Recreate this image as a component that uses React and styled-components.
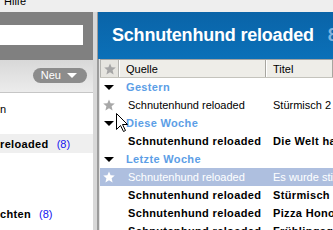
import React from "react";
import styled, { createGlobalStyle } from "styled-components";

const Global = createGlobalStyle`
  html, body { margin: 0; padding: 0; background: #ffffff; overflow: hidden; }
  body { font-family: "Liberation Sans", Arial, sans-serif; font-size: 11px; color: #000; }
`;

const Window = styled.div`
  position: relative;
  width: 333px;
  height: 230px;
  overflow: hidden;
  white-space: nowrap;
  display: flex;
  flex-direction: column;
`;

const MenuBar = styled.div`
  height: 12px;
  flex: none;
  background: #eeeeee;
  display: flex;
  align-items: flex-start;
  padding-left: 4px;
  overflow: hidden;
`;

const MenuItem = styled.span`
  margin-top: -5px;
  line-height: 12px;
  font-size: 11px;
`;

const Main = styled.div`
  flex: 1;
  display: flex;
  min-height: 0;
`;

const Sidebar = styled.div`
  width: 93px;
  flex: none;
  display: flex;
  flex-direction: column;
  background: #ffffff;
`;

const SearchBar = styled.div`
  height: 48px;
  flex: none;
  background: #808080;
  padding-top: 13px;
  box-sizing: border-box;
`;

const SearchInput = styled.div`
  width: 83px;
  height: 20px;
  background: #ffffff;
`;

const ToolBar = styled.div`
  height: 24px;
  flex: none;
  background: linear-gradient(#d8d8d8, #ececec);
  border-bottom: 1px solid #c6c6c6;
  display: flex;
  justify-content: flex-end;
  align-items: flex-start;
  padding: 8px 6px 0 0;
  box-sizing: content-box;
`;

const NewButton = styled.div`
  height: 15px;
  border-radius: 8px;
  background: #8c8c8c;
  color: #ffffff;
  display: flex;
  align-items: center;
  gap: 6px;
  padding: 0 10px 0 8px;
  font-size: 11px;
  line-height: 15px;
`;

const Caret = styled.span`
  width: 0;
  height: 0;
  border-left: 5px solid transparent;
  border-right: 5px solid transparent;
  border-top: 5px solid ${(p) => p.$color || "#ffffff"};
`;

const FeedList = styled.div`
  display: flex;
  flex-direction: column;
  gap: 16px;
  padding-top: 6px;
`;

const FeedRow = styled.div`
  height: 19px;
  display: flex;
  align-items: center;
  gap: 8px;
  background: ${(p) => (p.$active ? "#efefef" : "transparent")};
`;

const FeedName = styled.span`
  font-weight: ${(p) => (p.$bold ? 700 : 400)};
  letter-spacing: ${(p) => (p.$bold ? "0.35px" : "0")};
`;

const FeedCount = styled.span`
  color: #1414f0;
`;

const Splitter = styled.div`
  width: 4px;
  flex: none;
  background: #d8d8d8;
  border-right: 1px solid #9b9b9b;
`;

const Content = styled.div`
  flex: 1;
  min-width: 0;
  display: flex;
  flex-direction: column;
`;

const TitleBar = styled.div`
  height: 47px;
  flex: none;
  background: linear-gradient(#0a64a8, #0b70b8);
  display: flex;
  align-items: center;
  padding-left: 14px;
  color: #ffffff;
  font-size: 18px;
  font-weight: 700;
`;

const Title = styled.span`
  letter-spacing: -0.2px;
`;

const TitleCount = styled.span`
  margin-left: 14px;
  color: #7fb4e0;
`;

const Table = styled.div`
  flex: 1;
  border-left: 1px solid #9b9b9b;
  padding-left: 1px;
  background: #e4e4e4;
  display: flex;
  flex-direction: column;
`;

const HeaderRow = styled.div`
  height: 17px;
  flex: none;
  display: flex;
  background: #eeede8;
  border-top: 1px solid #a2a2a2;
  border-bottom: 1px solid #c4c3bc;
`;

const HeaderStar = styled.div`
  width: 17px;
  flex: none;
  display: flex;
  align-items: center;
  justify-content: center;
  border: 1px solid #b4b4b0;
  border-top: none;
  border-bottom: none;
  background: #e6e5e0;
`;

const HeaderCell = styled.div`
  width: ${(p) => (p.$w ? `${p.$w}px` : "auto")};
  flex: ${(p) => (p.$w ? "none" : "1")};
  display: flex;
  align-items: center;
  padding-left: 6px;
  border-left: 1px solid #ffffff;
  border-right: 1px solid #a7a6a0;
  box-sizing: border-box;
`;

const Body = styled.div`
  flex: 1;
  background: #ffffff;
  display: flex;
  flex-direction: column;
`;

const Row = styled.div`
  height: 18px;
  flex: none;
  display: flex;
  align-items: center;
  background: ${(p) => (p.$selected ? "#aebfdf" : "#ffffff")};
  color: ${(p) => (p.$selected ? "#ffffff" : "#000000")};
  font-weight: ${(p) => (p.$unread ? 700 : 400)};
  letter-spacing: ${(p) => (p.$unread ? "0.35px" : "0")};
`;

const StarCell = styled.div`
  width: 20px;
  flex: none;
  display: flex;
  align-items: center;
  padding-left: ${(p) => p.$pad || 3}px;
  box-sizing: border-box;
`;

const SourceCell = styled.div`
  width: 146px;
  flex: none;
  padding-left: 8px;
  box-sizing: border-box;
  overflow: hidden;
`;

const TitleCell = styled.div`
  flex: 1;
  padding-left: 7px;
  overflow: hidden;
`;

const GroupLabel = styled.div`
  padding-left: 6px;
  color: #5c9ee6;
  font-weight: 700;
  letter-spacing: 0.35px;
`;

const Pointer = styled.svg`
  position: absolute;
  left: 116px;
  top: 113px;
`;

const Star = ({ color }) => (
  <svg width="12" height="12" viewBox="0 0 12 12">
    <polygon
      points="6,0.4 7.6,4.3 11.8,4.6 8.6,7.3 9.6,11.4 6,9.2 2.4,11.4 3.4,7.3 0.2,4.6 4.4,4.3"
      fill={color}
    />
  </svg>
);

const Group = ({ label }) => (
  <Row>
    <StarCell $pad={4}>
      <Caret $color="#000000" />
    </StarCell>
    <GroupLabel>{label}</GroupLabel>
  </Row>
);

const Item = ({ source, title, unread, selected, star }) => (
  <Row $unread={unread} $selected={selected}>
    <StarCell>{star && <Star color={selected ? "#ffffff" : "#a8a8a8"} />}</StarCell>
    <SourceCell>{source}</SourceCell>
    <TitleCell>{title}</TitleCell>
  </Row>
);

export default function App() {
  return (
    <>
      <Global />
      <Window>
        <MenuBar>
          <MenuItem>Hilfe</MenuItem>
        </MenuBar>
        <Main>
          <Sidebar>
            <SearchBar>
              <SearchInput />
            </SearchBar>
            <ToolBar>
              <NewButton>
                Neu <Caret />
              </NewButton>
            </ToolBar>
            <FeedList>
              <FeedRow>
                <FeedName>n</FeedName>
              </FeedRow>
              <FeedRow $active>
                <FeedName $bold>reloaded</FeedName>
                <FeedCount>(8)</FeedCount>
              </FeedRow>
              <FeedRow />
              <FeedRow>
                <FeedName $bold>chten</FeedName>
                <FeedCount>(8)</FeedCount>
              </FeedRow>
            </FeedList>
          </Sidebar>
          <Splitter />
          <Content>
            <TitleBar>
              <Title>Schnutenhund reloaded</Title>
              <TitleCount>8</TitleCount>
            </TitleBar>
            <Table>
              <HeaderRow>
                <HeaderStar>
                  <Star color="#a6a6a6" />
                </HeaderStar>
                <HeaderCell $w={147}>Quelle</HeaderCell>
                <HeaderCell>Titel</HeaderCell>
              </HeaderRow>
              <Body>
                <Group label="Gestern" />
                <Item source="Schnutenhund reloaded" title="Stürmisch 2" star />
                <Group label="Diese Woche" />
                <Item source="Schnutenhund reloaded" title="Die Welt hat" unread />
                <Group label="Letzte Woche" />
                <Item source="Schnutenhund reloaded" title="Es wurde still" selected star />
                <Item source="Schnutenhund reloaded" title="Stürmisch 1" unread />
                <Item source="Schnutenhund reloaded" title="Pizza Honolulu" unread />
                <Item source="Schnutenhund reloaded" title="Frühlingsgefühle" unread />
              </Body>
            </Table>
          </Content>
        </Main>
        <Pointer width="13" height="20" viewBox="0 0 13 20">
          <polygon
            points="0.5,0.5 0.5,16.5 4.5,12.5 7.5,18.5 9.5,17.5 6.5,11.5 11.5,11.5"
            fill="#ffffff"
            stroke="#000000"
            strokeWidth="1"
          />
        </Pointer>
      </Window>
    </>
  );
}
